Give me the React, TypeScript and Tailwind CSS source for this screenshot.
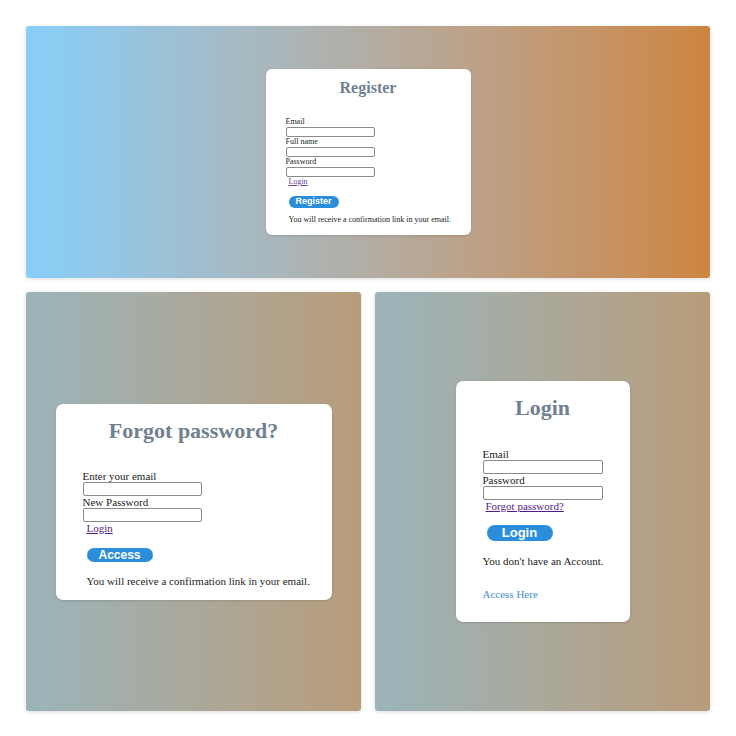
import React from 'react'

const serif = { fontFamily: '"Liberation Serif", "Times New Roman", serif' }
const sans = { fontFamily: '"Liberation Sans", Arial, sans-serif' }

function Field({ label, className, labelClass }: { label: string; className: string; labelClass: string }) {
  return (
    <>
      <label className={`block text-[#222] ${labelClass}`}>{label}</label>
      <input type="text" className={`block border border-[#8a8a8a] bg-white rounded-[2px] ${className}`} />
    </>
  )
}

function RegisterCard() {
  return (
    <div className="w-[205px] rounded-[6px] bg-white px-[20px] pt-[10px] pb-[10px] shadow-sm" style={serif}>
      <h2 className="text-center text-[16px] leading-[18px] font-bold text-[#708090]">Register</h2>
      <form className="mt-[20px]">
        <Field label="Email" labelClass="text-[8px] leading-[10px]" className="h-[10px] w-[89px]" />
        <Field label="Full name" labelClass="text-[8px] leading-[10px]" className="h-[10px] w-[89px]" />
        <Field label="Password" labelClass="text-[8px] leading-[10px]" className="h-[10px] w-[89px]" />
        <div className="ml-[3px]">
          <a href="#" className="block text-[8px] leading-[10px] text-[#6a3c9c] underline">Login</a>
          <button
            type="button"
            className="mt-[9px] flex h-[12px] w-[50px] items-center justify-center rounded-full bg-[#2a8edc] text-[9px] font-bold text-white"
            style={sans}
          >
            Register
          </button>
          <p className="mt-[7px] whitespace-nowrap text-[8px] leading-[10px] text-[#222]">
            You will receive a confirmation link in your email.
          </p>
        </div>
      </form>
    </div>
  )
}

function ForgotCard() {
  return (
    <div className="w-[276px] rounded-[7px] bg-white px-[27px] pt-[15px] pb-[13px] shadow-sm" style={serif}>
      <h2 className="text-center text-[22px] leading-[24px] font-bold text-[#708090]">Forgot password?</h2>
      <form className="mt-[27px]">
        <Field label="Enter your email" labelClass="text-[11px] leading-[12px]" className="h-[14px] w-[119px]" />
        <Field label="New Password" labelClass="text-[11px] leading-[12px]" className="h-[14px] w-[119px]" />
        <div className="ml-[4px]">
          <a href="#" className="block text-[11px] leading-[12px] text-[#551a8b] underline">Login</a>
          <button
            type="button"
            className="mt-[14px] flex h-[14px] w-[66px] items-center justify-center rounded-full bg-[#2a8edc] text-[12px] font-bold text-white"
            style={sans}
          >
            Access
          </button>
          <p className="mt-[13px] whitespace-nowrap text-[11px] leading-[12px] text-[#222]">
            You will receive a confirmation link in your email.
          </p>
        </div>
      </form>
    </div>
  )
}

function LoginCard() {
  return (
    <div className="w-[174px] rounded-[7px] bg-white px-[27px] pt-[15px] pb-[22px] shadow-sm" style={serif}>
      <h2 className="text-center text-[22px] leading-[24px] font-bold text-[#708090]">Login</h2>
      <form className="mt-[28px]">
        <Field label="Email" labelClass="text-[11px] leading-[12px]" className="h-[14px] w-[120px]" />
        <Field label="Password" labelClass="text-[11px] leading-[12px]" className="h-[14px] w-[120px]" />
        <a href="#" className="ml-[3px] block text-[11px] leading-[12px] text-[#551a8b] underline">Forgot password?</a>
        <button
          type="button"
          className="mt-[13px] ml-[4px] flex h-[16px] w-[66px] items-center justify-center rounded-full bg-[#2a8edc] text-[13px] font-bold text-white"
          style={sans}
        >
          Login
        </button>
        <p className="mt-[14px] whitespace-nowrap text-[11px] leading-[12px] text-[#222]">You don't have an Account.</p>
        <a href="#" className="mt-[21px] block text-[11px] leading-[12px] text-[#4a8fd8]">Access Here</a>
      </form>
    </div>
  )
}

export default function App() {
  return (
    <div className="grid h-[736px] w-[736px] grid-cols-2 gap-[14px] bg-white p-[26px]">
      <section className="col-span-2 flex h-[252px] items-center justify-center rounded-[3px] bg-gradient-to-r from-[#87cefa] to-[#cd853f] shadow-[0_1px_4px_rgba(0,0,0,0.15)]">
        <RegisterCard />
      </section>
      <section className="flex h-[419px] items-center justify-center rounded-[3px] bg-gradient-to-r from-[#9ab4ba] to-[#b89c7a] shadow-[0_1px_4px_rgba(0,0,0,0.15)]">
        <ForgotCard />
      </section>
      <section className="flex h-[419px] items-center justify-center rounded-[3px] bg-gradient-to-r from-[#9ab4ba] to-[#b89c7a] shadow-[0_1px_4px_rgba(0,0,0,0.15)]">
        <LoginCard />
      </section>
    </div>
  )
}
